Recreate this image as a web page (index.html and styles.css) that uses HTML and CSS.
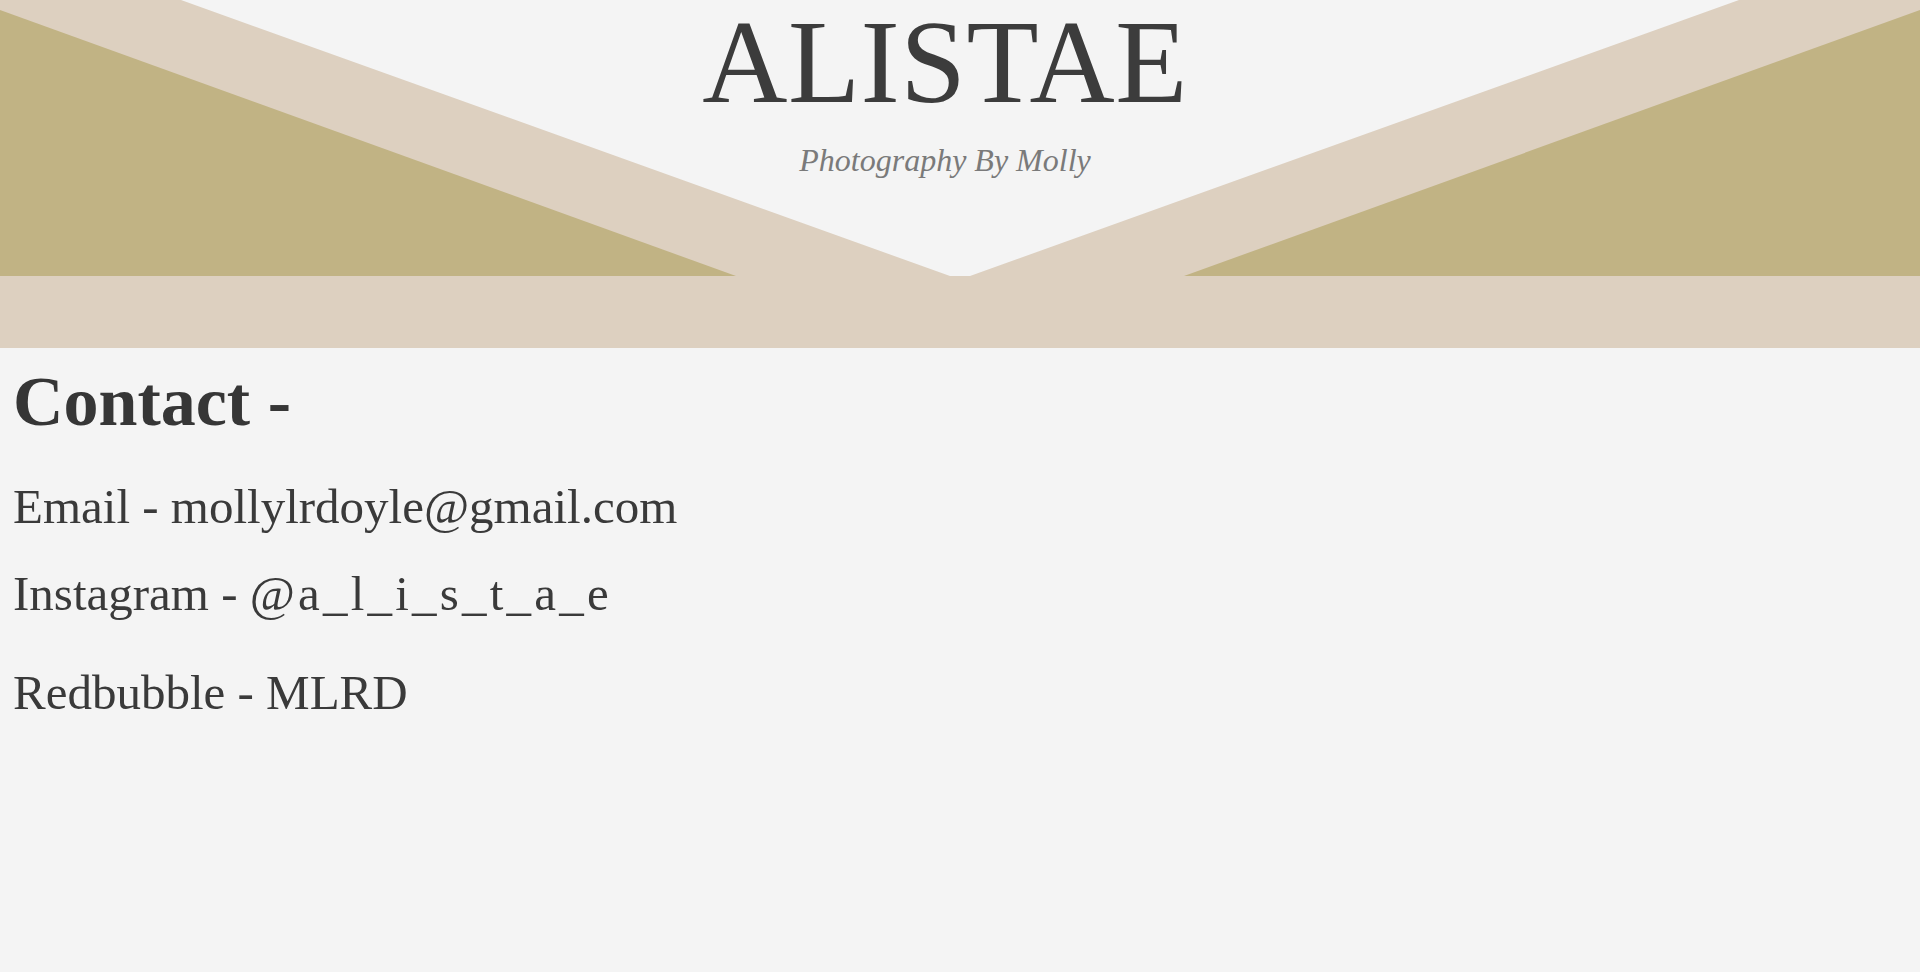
FILE: index.html
```html
<!DOCTYPE html>
<html lang="en">
<head>
<meta charset="utf-8">
<title>ALISTAE - Contact</title>
<link rel="stylesheet" href="styles.css">
</head>
<body>
<header class="banner">
  <svg class="banner-art" viewBox="0 0 1920 348" preserveAspectRatio="none" aria-hidden="true">
    <polygon fill="#ddd0c0" points="0,0 181,0 950,276 970,276 1739,0 1920,0 1920,348 0,348"/>
    <polygon fill="#c1b384" points="0,10 736,276 0,276"/>
    <polygon fill="#c1b384" points="1920,10 1184,276 1920,276"/>
  </svg>
  <div class="banner-text">
    <h1 class="site-title">ALISTAE</h1>
    <p class="site-sub">Photography By Molly</p>
  </div>
</header>
<main class="contact">
  <h2 class="contact-title">Contact -</h2>
  <p class="contact-line line-email">Email - mollylrdoyle@gmail.com</p>
  <p class="contact-line line-insta">Instagram - <span class="handle">@a_l_i_s_t_a_e</span></p>
  <p class="contact-line line-red">Redbubble - MLRD</p>
</main>
</body>
</html>
```
FILE: styles.css
```css
html, body {
  margin: 0;
  padding: 0;
  background: #f4f4f4;
  color: #363636;
  font-family: "Liberation Serif", "DejaVu Serif", serif;
}

.banner {
  position: relative;
  height: 348px;
  overflow: hidden;
}

.banner-art {
  position: absolute;
  left: 0;
  top: 0;
  width: 100%;
  height: 100%;
  display: block;
}

.banner-text {
  position: relative;
  display: flex;
  flex-direction: column;
  align-items: center;
  padding: 0 30px 0 0;
}

.site-title {
  margin: -5px 0 0 0;
  font-size: 118px;
  line-height: 1.15;
  font-weight: 400;
  letter-spacing: 0.5px;
  color: #3c3c3c;
}

.site-sub {
  margin: 13px 0 0 0;
  font-size: 32px;
  line-height: 1;
  font-style: italic;
  color: #7a7a7a;
}

.contact {
  display: flex;
  flex-direction: column;
  align-items: flex-start;
  padding: 19px 12px 0 13px;
}

.contact-title {
  margin: 0;
  font-size: 70px;
  line-height: 1;
  font-weight: 700;
  color: #363636;
}

.contact-line {
  margin: 0;
  font-size: 49px;
  line-height: 1;
  color: #3a3a3a;
}

.handle {
  letter-spacing: 3.2px;
}

.line-email { margin-top: 45px; }
.line-insta { margin-top: 38px; }
.line-red { margin-top: 50px; }
```
